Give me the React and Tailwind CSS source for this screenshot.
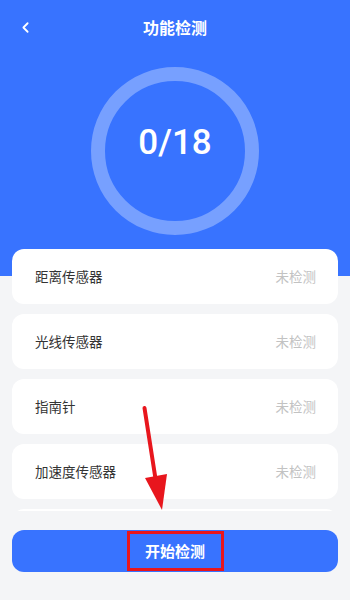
import { ChevronLeft } from 'lucide-react'

const SENSORS = ['距离传感器', '光线传感器', '指南针', '加速度传感器']

export default function App() {
  return (
    <div
      className="relative w-[350px] h-[600px] bg-[#f4f5f7] flex flex-col overflow-hidden"
      style={{ fontFamily: '"Noto Sans CJK SC", "Noto Sans", sans-serif' }}
    >
      {/* header */}
      <div className="bg-[#3873ff] flex flex-col">
        <div className="h-[54px] flex items-center relative">
          <ChevronLeft className="absolute left-[17px] w-[17px] h-[17px] text-white" strokeWidth={2.5} />
          <h1 className="flex-1 text-center text-white text-[16px] font-bold">功能检测</h1>
        </div>
        <div className="pt-[13px] pb-[14px] flex justify-center">
          <div className="w-[168px] h-[168px] rounded-full border-[14px] border-[#77a0ff] flex items-center justify-center">
            <span
              className="text-white text-[35px] font-medium leading-none -mt-[18px]"
              style={{ fontFamily: 'Roboto, "Noto Sans", sans-serif' }}
            >
              0/18
            </span>
          </div>
        </div>
      </div>

      {/* list, scrolled so the next card just peeks in */}
      <div className="h-[262px] overflow-hidden px-3 bg-[linear-gradient(to_bottom,#3873ff_27px,transparent_27px)]">
        <div className="flex flex-col gap-[10px]">
          {SENSORS.map((name) => (
            <div key={name} className="h-[55px] bg-white rounded-xl flex items-center justify-between pl-[23px] pr-[22px]">
              <span className="text-[13.5px] text-[#333]">{name}</span>
              <span className="text-[13.5px] text-[#c2c2c2]">未检测</span>
            </div>
          ))}
          <div className="h-[55px] bg-white rounded-xl" />
        </div>
      </div>

      {/* button */}
      <div className="px-3 pt-[19px]">
        <button className="w-full h-[42px] rounded-xl bg-[#3873ff] flex items-center justify-center">
          <span className="w-[97px] h-[40px] border-[3px] border-[#e8161d] flex items-center justify-center text-white text-[15px] font-bold">
            开始检测
          </span>
        </button>
      </div>

      {/* annotation arrow */}
      <svg className="absolute left-0 top-0 pointer-events-none" width="350" height="600" viewBox="0 0 350 600">
        <line x1="144.5" y1="408" x2="156" y2="482" stroke="#e8161d" strokeWidth="4" strokeLinecap="round" />
        <polygon points="145,478 167,474 162,510" fill="#e8161d" />
      </svg>
    </div>
  )
}
